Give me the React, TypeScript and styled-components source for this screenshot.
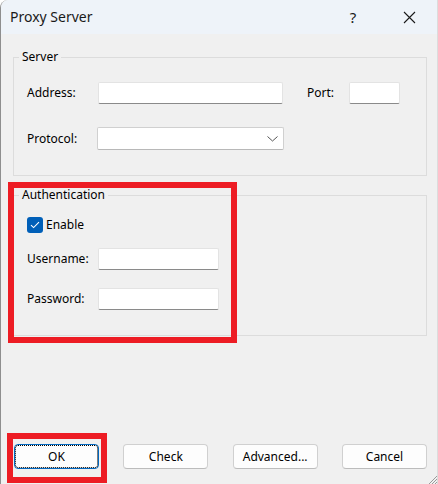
import React from "react";
import styled, { createGlobalStyle } from "styled-components";

const GlobalStyle = createGlobalStyle`
  html, body {
    margin: 0;
    padding: 0;
    background: #ffffff;
  }
  * { box-sizing: border-box; }
`;

const font = `"Noto Sans", "Open Sans", "Liberation Sans", sans-serif`;

const Window = styled.div`
  position: relative;
  width: 438px;
  height: 484px;
  display: flex;
  flex-direction: column;
  background: #f0f0f0;
  border-left: 1px solid #8e8e8e;
  border-right: 1px solid #dcdcdc;
  border-top-left-radius: 8px;
  overflow: hidden;
  font-family: ${font};
  font-size: 12px;
  color: #000;
`;

const TitleBar = styled.div`
  height: 34px;
  flex: none;
  display: flex;
  align-items: center;
  background: #eef3f9;
  padding-left: 9px;
  padding-right: 5px;
`;

const Title = styled.div`
  flex: 1;
  font-size: 14px;
  color: #1a1a1a;
  padding-bottom: 1px;
`;

const CaptionButton = styled.div<{ $w: number }>`
  width: ${(p) => p.$w}px;
  height: 34px;
  display: flex;
  align-items: center;
  justify-content: center;
  font-size: 15px;
  color: #1a1a1a;
`;

const Body = styled.div`
  flex: 1;
  display: flex;
  flex-direction: column;
  padding: 0 10px 15px 12px;
`;

const GroupArea = styled.div<{ $top: number }>`
  position: relative;
  margin-top: ${(p) => p.$top}px;
`;

const GroupBox = styled.fieldset`
  margin: 0;
  border: 1px solid #dcdcdc;
  padding: 0 13px 25px 13px;
  min-width: 0;
`;

const GroupTitle = styled.legend`
  margin-left: -8px;
  padding: 0 3px;
  font-size: 12px;
  line-height: 16px;
`;

const ServerGrid = styled.div`
  padding-top: 17px;
  display: grid;
  grid-template-columns: 71px 185px 66px 51px;
  grid-template-rows: 22px 23px;
  row-gap: 23px;
  align-items: center;
`;

const AuthList = styled.div`
  padding-top: 14px;
  display: flex;
  flex-direction: column;
`;

const FormRow = styled.div<{ $gap: number }>`
  display: grid;
  grid-template-columns: 71px 121px;
  align-items: center;
  margin-top: ${(p) => p.$gap}px;
`;

const Label = styled.span<{ $indent?: number }>`
  margin-left: ${(p) => p.$indent ?? 0}px;
  white-space: nowrap;
  line-height: 16px;
`;

const TextBox = styled.div`
  height: 22px;
  width: 100%;
  background: #ffffff;
  border: 1px solid #e3e3e3;
  border-bottom-color: #8a8a8a;
  border-radius: 2px;
`;

const ComboBox = styled.div`
  height: 23px;
  width: 187px;
  margin-left: -1px;
  background: #ffffff;
  border: 1px solid #d0d0d0;
  border-bottom-color: #b8b8b8;
  border-radius: 2px;
  display: flex;
  align-items: center;
  justify-content: flex-end;
  padding-right: 5px;
`;

const CheckRow = styled.label`
  display: flex;
  align-items: center;
  gap: 3px;
  height: 16px;
  line-height: 16px;
`;

const CheckBox = styled.span`
  width: 16px;
  height: 16px;
  border-radius: 3px;
  background: #005fb8;
  display: flex;
  align-items: center;
  justify-content: center;
`;

const Spacer = styled.div`
  flex: 1;
`;

const ButtonBar = styled.div`
  display: flex;
  justify-content: space-between;
  padding-left: 1px;
`;

const ButtonSlot = styled.div`
  position: relative;
`;

const Button = styled.div<{ $default?: boolean }>`
  width: 85px;
  height: 25px;
  display: flex;
  align-items: center;
  justify-content: center;
  background: #fdfdfd;
  border: 1px solid ${(p) => (p.$default ? "#0067c0" : "#d0d0d0")};
  border-bottom-color: ${(p) => (p.$default ? "#0067c0" : "#bcbcbc")};
  border-radius: 4px;
  ${(p) => (p.$default ? "outline: 1px dotted #000; outline-offset: -2px;" : "")}
  font-size: 12px;
  line-height: 16px;
`;

/* red annotation frames drawn over the dialog */
const Highlight = styled.div<{ $l: number; $t: number; $w: number; $h: number }>`
  position: absolute;
  left: ${(p) => p.$l}px;
  top: ${(p) => p.$t}px;
  width: ${(p) => p.$w}px;
  height: ${(p) => p.$h}px;
  border: 6px solid #ed1c24;
  pointer-events: none;
`;

const Grip = styled.svg`
  position: absolute;
  right: 0;
  bottom: 0;
`;

export default function App() {
  return (
    <>
      <GlobalStyle />
      <Window>
        <TitleBar>
          <Title>Proxy Server</Title>
          <CaptionButton $w={66}>?</CaptionButton>
          <CaptionButton $w={46}>
            <svg width="13" height="13" viewBox="0 0 13 13">
              <path d="M1 1 L12 12 M12 1 L1 12" stroke="#1a1a1a" strokeWidth="1.1" fill="none" />
            </svg>
          </CaptionButton>
        </TitleBar>
        <Body>
          <GroupArea $top={15}>
            <GroupBox>
              <GroupTitle>Server</GroupTitle>
              <ServerGrid>
                <Label>Address:</Label>
                <TextBox />
                <Label $indent={24}>Port:</Label>
                <TextBox />
                <Label>Protocol:</Label>
                <ComboBox>
                  <svg width="11" height="6" viewBox="0 0 11 6">
                    <path d="M0.5 0.5 L5.5 5 L10.5 0.5" stroke="#555" strokeWidth="1" fill="none" />
                  </svg>
                </ComboBox>
              </ServerGrid>
            </GroupBox>
          </GroupArea>
          <GroupArea $top={11}>
            <GroupBox>
              <GroupTitle>Authentication</GroupTitle>
              <AuthList>
                <CheckRow>
                  <CheckBox>
                    <svg width="10" height="8" viewBox="0 0 10 8">
                      <path d="M1 4.2 L3.6 6.6 L9 1.2" stroke="#fff" strokeWidth="1.1" fill="none" />
                    </svg>
                  </CheckBox>
                  Enable
                </CheckRow>
                <FormRow $gap={15}>
                  <Label>Username:</Label>
                  <TextBox />
                </FormRow>
                <FormRow $gap={18}>
                  <Label>Password:</Label>
                  <TextBox />
                </FormRow>
              </AuthList>
            </GroupBox>
            <Highlight $l={-5} $t={-5} $w={229} $h={161} />
          </GroupArea>
          <Spacer />
          <ButtonBar>
            <ButtonSlot>
              <Button $default>OK</Button>
              <Highlight $l={-7} $t={-11} $w={100} $h={50} />
            </ButtonSlot>
            <Button>Check</Button>
            <Button>Advanced...</Button>
            <Button>Cancel</Button>
          </ButtonBar>
        </Body>
        <Grip width="9" height="9" viewBox="0 0 9 9">
          <path d="M9 1 L1 9 M9 4 L4 9 M9 7 L7 9" stroke="#9a9a9a" strokeWidth="1" fill="none" />
        </Grip>
      </Window>
    </>
  );
}
